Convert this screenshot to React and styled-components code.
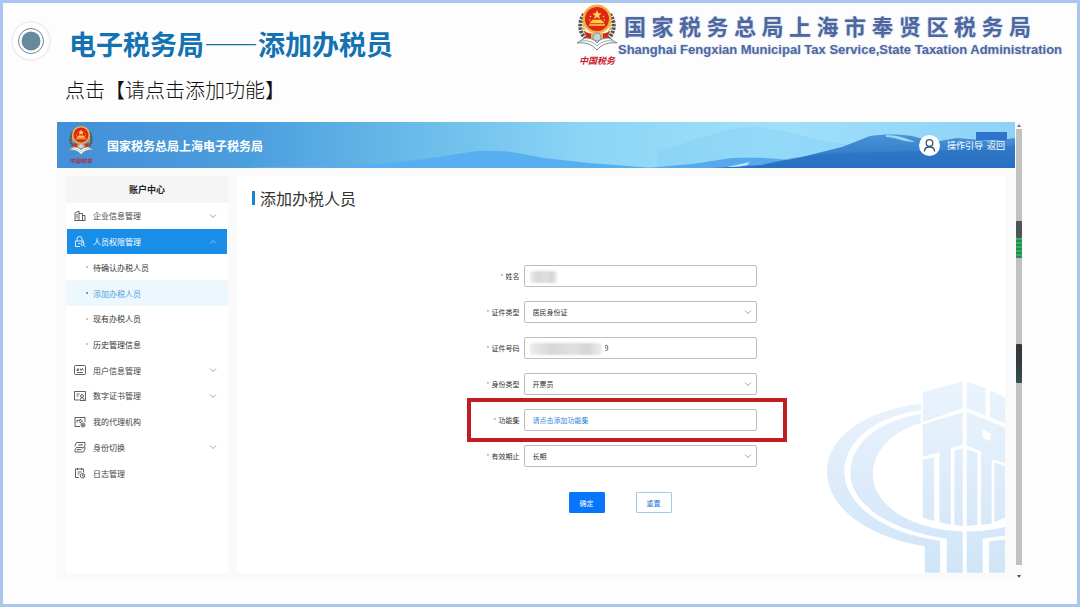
import styled, { createGlobalStyle, css } from "styled-components";

const GlobalStyle = createGlobalStyle`
  * {
    box-sizing: border-box;
  }

  body {
    margin: 0;
    background: #fdfdfd;
    color: #333;
    font-family: "Noto Sans CJK SC", "Noto Sans", sans-serif;
  }

  h1, h2, p, ul {
    margin: 0;
    padding: 0;
  }

  input, select, button {
    font-family: inherit;
  }
`;

const Slide = styled.div`
  min-height: 100vh;
  padding-bottom: 26px;
  border: 3px solid #a9c6ee;
  background: #fdfdfd;
`;

const SlideHeader = styled.header`
  display: flex;
  justify-content: space-between;
  height: 72px;
  padding: 0 16px 0 8px;
`;

const TitleGroup = styled.div`
  display: flex;
  align-items: flex-start;
  gap: 18px;
  padding-top: 18px;
`;

const SlideTitle = styled.h1`
  color: #1272b2;
  font-size: 27px;
  line-height: 46px;
  white-space: nowrap;
`;

const Subtitle = styled.p`
  padding-left: 62px;
  color: #111;
  font-size: 20px;
  font-weight: 300;
  line-height: 30px;
`;

const Brand = styled.div`
  display: flex;
  align-items: flex-start;
`;

const BrandText = styled.div`
  width: 443px;
  padding-top: 8px;
  color: #4f679f;
  font-weight: 700;
  text-shadow: 0 0 2px #b9cbea;
`;

const BrandName = styled.p`
  margin: 0 30px 0 6px;
  font-size: 22px;
  line-height: 28px;
  text-align: justify;
  text-align-last: justify;
`;

const BrandEnglish = styled.p`
  font-family: "Liberation Sans", sans-serif;
  font-size: 13px;
  line-height: 22px;
  white-space: nowrap;
`;

const Portal = styled.section`
  display: grid;
  grid-template-columns: 1fr 8px;
  margin: 17px 54px 0;
`;

const Banner = styled.header`
  position: relative;
  display: flex;
  align-items: center;
  height: 46px;
  padding: 0 10px;
  background: #5aaee6;
  color: #fff;
`;

const Scenery = styled.svg`
  position: absolute;
  inset: 0;
  width: 100%;
  height: 100%;
`;

const BannerLogo = styled.div`
  position: relative;
  display: flex;
  flex: 1;
  align-items: center;
  gap: 12px;
  font-size: 12px;
  font-weight: 700;
`;

const BannerLinks = styled.nav`
  position: relative;
  display: flex;
  align-items: center;
  gap: 4px;
  font-size: 9px;

  a {
    color: #fff;
    text-decoration: none;
  }

  svg {
    margin-right: 3px;
  }
`;

const Body = styled.div`
  display: flex;
  gap: 9px;
  padding: 8px 10px 5px 9px;
  background: #fafafa;
`;

const Sidebar = styled.nav`
  flex: 0 0 162px;
  background: #fff;
`;

const SidebarTitle = styled.h2`
  background: #f5f5f5;
  color: #222;
  font-size: 9px;
  line-height: 27px;
  text-align: center;
`;

const Menu = styled.ul`
  display: grid;
  grid-auto-rows: 1fr;
  min-height: 283px;
  list-style: none;
`;

const MenuLink = styled.a`
  display: flex;
  align-items: center;
  gap: 7px;
  height: 100%;
  margin: 0 1px;
  padding: 0 10px 0 7px;
  color: #444;
  font-size: 8px;
  text-decoration: none;

  span {
    flex: 1;
  }

  ${({ $open }) =>
    $open &&
    css`
      background: #188ee8;
      color: #fff;
    `}
`;

const SubLink = styled.a`
  display: flex;
  align-items: center;
  gap: 5px;
  height: 100%;
  padding-left: 20px;
  background: ${({ $current }) => ($current ? "#edf7fe" : "transparent")};
  color: ${({ $current }) => ($current ? "#4a9fdc" : "#333")};
  font-size: 8px;
  text-decoration: none;

  &::before {
    content: "";
    width: 2px;
    height: 2px;
    border-radius: 50%;
    background: ${({ $current }) => ($current ? "#2f86c8" : "#b5b5b5")};
  }
`;

const Card = styled.main`
  position: relative;
  flex: 1;
  padding: 13px 17px 60px 15px;
  background: #fff;
`;

const CardTitle = styled.h2`
  display: flex;
  align-items: center;
  gap: 5px;
  color: #333;
  font-size: 16px;
  font-weight: 400;
  line-height: 18px;

  &::before {
    content: "";
    width: 3px;
    height: 14px;
    background: #1b83cf;
  }
`;

const Watermark = styled.svg`
  position: absolute;
  right: 0;
  bottom: 0;
`;

const Form = styled.form`
  position: relative;
  display: grid;
  gap: 14px;
  width: 273px;
  margin: 58px auto 0;
`;

const Field = styled.div`
  position: relative;
  display: grid;
  grid-template-columns: 36px 1fr;
  align-items: center;
  gap: 4px;

  ${({ $marked }) =>
    $marked &&
    css`
      &::after {
        content: "";
        position: absolute;
        inset: -11px -30px -11px -17px;
        border: 4px solid #bf1d1f;
        pointer-events: none;
      }
    `}
`;

const Label = styled.label`
  color: #333;
  font-size: 7px;
  text-align: right;
  white-space: nowrap;

  &::before {
    content: "*";
    margin-right: 2px;
    color: #999;
  }
`;

const Control = styled.div`
  position: relative;
  display: flex;

  > svg {
    position: absolute;
    top: 7px;
    right: 5px;
    pointer-events: none;
  }
`;

const box = css`
  width: 100%;
  height: 22px;
  padding: 0 8px;
  border: 1px solid #bdbdbd;
  border-radius: 2px;
  background: #fff;
  color: #333;
  font-size: 7px;
  outline: none;
`;

const TextInput = styled.input`
  ${box}
  padding-left: ${({ $indent }) => ($indent ? "80px" : "8px")};

  &::placeholder {
    color: #2f86d8;
    opacity: 1;
  }
`;

const Select = styled.select`
  ${box}
  appearance: none;
`;

// Hides the private part of a value
const Redaction = styled.i`
  position: absolute;
  top: 6px;
  left: 6px;
  width: ${({ $width }) => $width}px;
  height: 12px;
  border-radius: 3px;
  background: linear-gradient(90deg, #ececec, #d6d6d6 30%, #e0e0e0 60%, #d4d4d4 80%, #eee);
  filter: blur(1px);
`;

const Actions = styled.div`
  display: flex;
  justify-content: center;
  gap: 31px;
  margin-top: 11px;
`;

const Button = styled.button`
  width: 36px;
  height: 21px;
  padding: 0;
  border: 1px solid ${({ $primary }) => ($primary ? "#0876fb" : "#a5cbe4")};
  border-radius: 1px;
  background: ${({ $primary }) => ($primary ? "#0876fb" : "#fff")};
  color: ${({ $primary }) => ($primary ? "#fff" : "#1b78d8")};
  font-size: 7px;
`;

const Scrollbar = styled.div`
  position: relative;
  display: flex;
  flex-direction: column;
  align-items: center;
  gap: 2px;
  padding: 2px 0 0;
  background: #fafafa;
`;

const Thumb = styled.div`
  flex: 1;
  width: 6px;
  margin-bottom: 8px;
  background: #c1c1c1;
`;

const ScrollMark = styled.i`
  position: absolute;
  top: ${({ $top }) => $top}px;
  left: 1px;
  width: 6px;
  height: ${({ $height }) => $height}px;
  border-radius: 1px;
  background: ${({ $fill }) => $fill};
`;

const Bullet = () => (
  <svg width="40" height="40" viewBox="0 0 40 40" aria-hidden="true">
    <circle cx="20" cy="20" r="19" fill="#fff" stroke="#f1f1f1" strokeWidth="2" />
    <circle cx="20" cy="20" r="12.5" fill="#fff" stroke="#77828a" strokeWidth="1" />
    <circle cx="20" cy="20" r="9.5" fill="#67899f" />
  </svg>
);

const Emblem = ({ width, height, ribbon = "#c8202a" }) => (
  <svg width={width} height={height} viewBox="0 0 42 64" role="img" aria-label="中国税务">
    <path d="M8 11C2 20 3 32 13 38M34 11C40 20 39 32 29 38" fill="none" stroke="#5b5547" strokeWidth="4" strokeDasharray="2.5 1" />
    <path d="M10 13C6 21 7 29 14 35M32 13C36 21 35 29 28 35" fill="none" stroke="#d8a646" strokeWidth="2" strokeDasharray="2 1" />
    <circle cx="21" cy="16" r="14.5" fill="#f0b33c" />
    <circle cx="21" cy="16" r="12" fill="#df2419" />
    <path d="M21 7l1.3 3.2 3.4.2-2.6 2.2.9 3.3-3-1.8-3 1.8.9-3.3-2.6-2.2 3.4-.2z" fill="#ffd94c" />
    <path d="M14 13l1 1M28 13l-1 1M13 17h1.5M27.500 17H29" stroke="#ffd94c" strokeWidth="1.2" />
    <path d="M13 22h16M15 19.500h12l-2-2h-8z" stroke="#ffd040" strokeWidth="1.4" fill="#ffd040" />
    <path d="M8 28c5 4 21 4 26 0l-3 8H11z" fill="#d4291c" />
    <path d="M15 31h12v5H15z" fill="#edb53e" />
    <circle cx="21" cy="34" r="4" fill="#c8d5df" stroke="#8b98a4" />
    <path d="M1 40l8-5c5 0 9 1 12 5 3-4 7-5 12-5l8 5c-8-1-15 1-20 7C16 41 9 39 1 40z" fill="#fff" stroke="#7c8883" strokeWidth="1" />
    <path d="M5 38c7-1 12 1 16 5 4-4 9-6 16-5" fill="none" stroke="#9eaaa5" strokeWidth="1" />
    <text x="3" y="61" fill={ribbon} fontSize="9" fontWeight="700" fontStyle="italic">中国税务</text>
  </svg>
);

const BannerScenery = () => (
  <Scenery viewBox="0 0 958 46" preserveAspectRatio="none" aria-hidden="true">
    <defs>
      <linearGradient id="sky">
        <stop offset="0" stopColor="#438fd8" />
        <stop offset=".2" stopColor="#4b9edd" />
        <stop offset=".36" stopColor="#67b9e9" />
        <stop offset=".55" stopColor="#8bd5f5" />
        <stop offset=".75" stopColor="#9fe0fb" />
        <stop offset="1" stopColor="#8ed2f6" />
      </linearGradient>
      <linearGradient id="ridge" x2="0" y2="1">
        <stop offset="0" stopColor="#4a94d6" />
        <stop offset=".5" stopColor="#327ecb" />
        <stop offset="1" stopColor="#2a70c0" />
      </linearGradient>
    </defs>
    <path d="M0 0h958v46H0z" fill="url(#sky)" />
    <path d="M600 30c40-12 75-27 103-25 30 4 50 13 85 17l170 4v20H600z" fill="#7fcbf4" opacity=".35" />
    <path d="M190 46c50-3 95-1 133-4l45-5 45-7c14-2 28-1 42 0l32 6 45 5 65 5z" fill="#57aff1" />
    <path d="M590 46l45-4 40-6c20-1 50 0 70 4l45 6z" fill="#57a9ed" />
    <path d="M655 46l50-3 40-8 40-10 28-11c15-2 27-2 42 0l22 6 23-4 35 3 23-3v36z" fill="url(#ridge)" />
    <path d="M690 43c-8 2-15 2-20 2l23-5z" fill="#bfe8fb" />
    <path d="M829 13c11 0 20 3 29 7-12 0-20-5-29-5z" fill="#a4d4f4" />
    <path d="M705 43c65-19 130-8 253-20v23H690z" fill="#266abb" opacity=".4" />
    <path d="M919 10h31v8h-31z" fill="#2c74cd" />
  </Scenery>
);

const UserBadge = () => (
  <svg width="21" height="21" viewBox="0 0 21 21" aria-hidden="true">
    <circle cx="10.500" cy="10.500" r="10.500" fill="#fff" />
    <circle cx="10.500" cy="8" r="3.300" fill="none" stroke="#36536f" strokeWidth="1.300" />
    <path d="M5.300 16.500c.2-6 10.200-6 10.400 0" fill="none" stroke="#36536f" strokeWidth="1.300" />
  </svg>
);

const Chevron = ({ up }) => (
  <svg width="8" height="8" viewBox="0 0 8 8" fill="none" stroke="currentColor" opacity=".6" strokeWidth=".8" aria-hidden="true">
    <path d={up ? "M1 5.500l3-3 3 3" : "M1 2.500l3 3 3-3"} />
  </svg>
);

const iconPaths = {
  company: "M2 21V6l8-4v19M10 7h7v14M17 11h5v10M1 21h22M6 8v9",
  lock: "M6 10V6a5 5 0 0 1 10 0v4M12 21H3V10h16v3M17 13a3 3 0 1 1 0 6 3 3 0 0 1 0-6M20 19l3 3M8 15h4",
  user: "M3 3h18a2 2 0 0 1 2 2v14a2 2 0 0 1-2 2H3a2 2 0 0 1-2-2V5a2 2 0 0 1 2-2M6 10h3v3H6zM12 9l2 4 3-4 2 4M6 17h12",
  certificate: "M10 20H1V3h22v18h-3M5 8h6M5 12h4M16 9a3 3 0 1 1 0 6 3 3 0 0 1 0-6M12 21v-3l4-3 4 3v3z",
  agency: "M12 21H2V3h20v9M6 13V9h6V6l5 4-5 4v-3M18 14a4 4 0 1 1 0 8 4 4 0 0 1 0-8M18 16v4M16 18h4",
  switch: "M2 11V9l3-6h17v5l-3 6h-3M22 12v4l-3 6H2v-5l3-4h12M8 8h9l-2-2M15 17H6l2 2",
  log: "M10 21H3V4h16v7M7 2v4M15 2v4M7 10h8M7 14h4M17 13a4.500 4.500 0 1 1 0 9 4.500 4.500 0 0 1 0-9M17 15v3h3",
};

const MenuIcon = ({ name }) => (
  <svg width="12" height="12" viewBox="0 0 24 24" fill="none" stroke="currentColor" strokeWidth="1.700" aria-hidden="true">
    <path d={iconPaths[name]} />
  </svg>
);

const TowerWatermark = () => (
  <Watermark width="178" height="193" viewBox="80 62 535 578" aria-hidden="true">
    <defs>
      <linearGradient id="tower" gradientUnits="userSpaceOnUse" x1="0" y1="62" x2="0" y2="640">
        <stop offset="0" stopColor="#ebf4fd" />
        <stop offset=".5" stopColor="#deecfa" />
        <stop offset="1" stopColor="#cfe5f8" />
      </linearGradient>
    </defs>
    <g fill="url(#tower)">
      <path d="M362 132C200 150 80 230 80 335c0 105 112 195 294 226v79h46v-96C240 520 132 430 132 335c0-85 88-165 230-183z" />
      <path d="M362 163c-130 20-212 92-212 177 0 90 110 172 290 198v102h48V516c-170-6-270-86-270-171 0-75 62-132 144-155z" />
      <path d="M500 516c45 0 85-6 115-14v26l-67 10v102h-48z" />
      <path d="M567 546l48-6v100h-48z" />
      <path d="M368 98l120-33v80l-120 43zM500 65l57 21v82l-57-23zM570 92l45 22v78l-45-18z" />
      <path d="M368 195l120-38v98l-36 11v230l-34-7V279l-50 12z" />
      <path fillRule="evenodd" d="M500 157l115 46v108l-40-12v193l-32 5V276l-43-18zM548 208v28l24 8v-22z" />
      <path d="M368 301l34-8v192l-34-11zM463 273l25-6v233l-25-3zM500 268l32 12v217l-32 3zM583 309l32 10v156l-32 13z" />
    </g>
  </Watermark>
);

const menu = [
  { label: "企业信息管理", icon: "company", expandable: true },
  { label: "人员权限管理", icon: "lock", expandable: true, open: true },
  { label: "待确认办税人员", sub: true },
  { label: "添加办税人员", sub: true, current: true },
  { label: "现有办税人员", sub: true },
  { label: "历史管理信息", sub: true },
  { label: "用户信息管理", icon: "user", expandable: true },
  { label: "数字证书管理", icon: "certificate", expandable: true },
  { label: "我的代理机构", icon: "agency" },
  { label: "身份切换", icon: "switch", expandable: true },
  { label: "日志管理", icon: "log" },
];

const MenuEntry = ({ item }) => {
  if (item.sub) {
    return (
      <li>
        <SubLink href="#" $current={item.current}>{item.label}</SubLink>
      </li>
    );
  }
  return (
    <li>
      <MenuLink href="#" $open={item.open}>
        <MenuIcon name={item.icon} />
        <span>{item.label}</span>
        {item.expandable && <Chevron up={item.open} />}
      </MenuLink>
    </li>
  );
};

const SelectField = ({ id, label, value }) => (
  <Field>
    <Label htmlFor={id}>{label}</Label>
    <Control>
      <Select id={id} defaultValue={value}>
        <option>{value}</option>
      </Select>
      <Chevron />
    </Control>
  </Field>
);

const PersonForm = () => (
  <Form onSubmit={(e) => e.preventDefault()}>
    <Field>
      <Label htmlFor="name">姓名</Label>
      <Control>
        <TextInput id="name" />
        <Redaction $width={27} />
      </Control>
    </Field>
    <SelectField id="idType" label="证件类型" value="居民身份证" />
    <Field>
      <Label htmlFor="idNumber">证件号码</Label>
      <Control>
        <TextInput id="idNumber" defaultValue="9" $indent />
        <Redaction $width={72} />
      </Control>
    </Field>
    <SelectField id="role" label="身份类型" value="开票员" />
    <Field $marked>
      <Label htmlFor="features">功能集</Label>
      <Control>
        <TextInput id="features" placeholder="请点击添加功能集" />
      </Control>
    </Field>
    <SelectField id="expiry" label="有效期止" value="长期" />
    <Actions>
      <Button type="submit" $primary>确定</Button>
      <Button type="reset">重置</Button>
    </Actions>
  </Form>
);

const App = () => (
  <>
    <GlobalStyle />
    <Slide lang="zh-CN">
      <SlideHeader>
        <TitleGroup>
          <Bullet />
          <SlideTitle>电子税务局——添加办税员</SlideTitle>
        </TitleGroup>
        <Brand>
          <Emblem width={42} height={64} />
          <BrandText>
            <BrandName>国家税务总局上海市奉贤区税务局</BrandName>
            <BrandEnglish>Shanghai Fengxian Municipal Tax Service,State Taxation Administration</BrandEnglish>
          </BrandText>
        </Brand>
      </SlideHeader>
      <Subtitle>点击【请点击添加功能】</Subtitle>
      <Portal>
        <div>
          <Banner>
            <BannerScenery />
            <BannerLogo>
              <Emblem width={28} height={40} ribbon="#a3304e" />
              国家税务总局上海电子税务局
            </BannerLogo>
            <BannerLinks>
              <UserBadge />
              <a href="#">操作引导</a>
              <a href="#">返回</a>
            </BannerLinks>
          </Banner>
          <Body>
            <Sidebar>
              <SidebarTitle>账户中心</SidebarTitle>
              <Menu>
                {menu.map((item) => (
                  <MenuEntry key={item.label} item={item} />
                ))}
              </Menu>
            </Sidebar>
            <Card>
              <CardTitle>添加办税人员</CardTitle>
              <TowerWatermark />
              <PersonForm />
            </Card>
          </Body>
        </div>
        <Scrollbar>
          <svg width="4" height="3" viewBox="0 0 4 3"><path d="M0 3l2-3 2 3z" fill="#777" /></svg>
          <Thumb />
          <svg width="4" height="3" viewBox="0 0 4 3"><path d="M0 0l2 3 2-3z" fill="#555" /></svg>
          <ScrollMark $top={99} $height={17} $fill="#4d5453" />
          <ScrollMark $top={116} $height={20} $fill="repeating-linear-gradient(#35ad62 0 2px, #2b8750 2px 4px)" />
          <ScrollMark $top={222} $height={39} $fill="linear-gradient(#35393d 45%, #35504f)" />
        </Scrollbar>
      </Portal>
    </Slide>
  </>
);

export default App;
